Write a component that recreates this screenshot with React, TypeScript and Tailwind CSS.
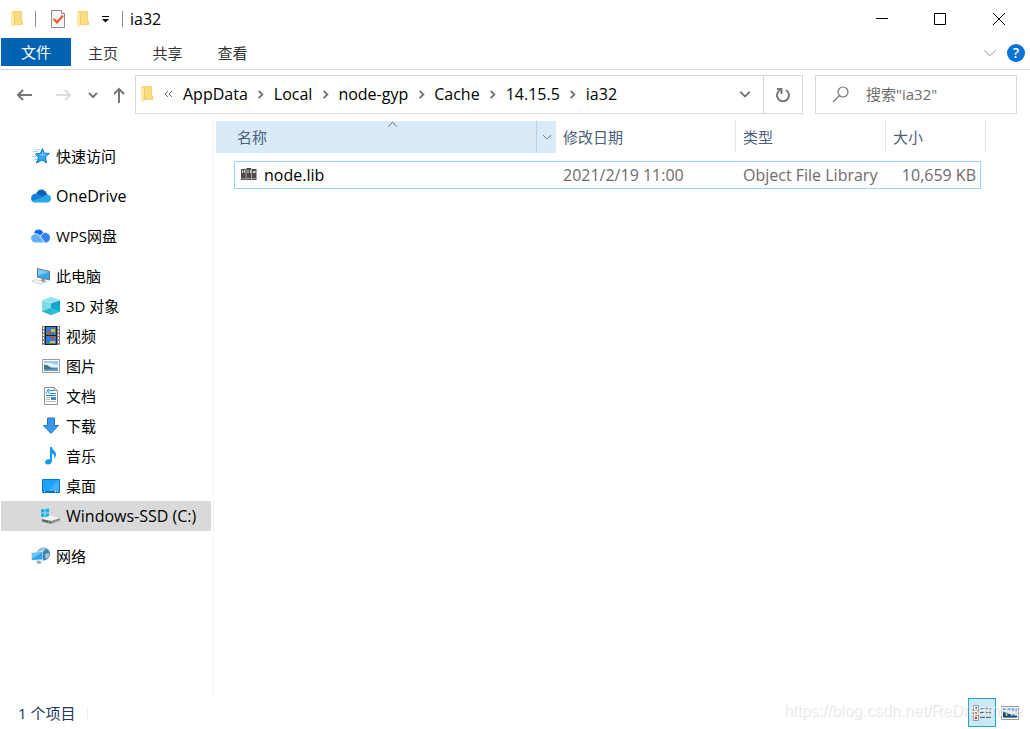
import React from "react";

const Folder = (): React.ReactElement => (
  <svg width="14" height="18" viewBox="0 0 14 18" className="shrink-0">
    <path d="M2 1h10v10h1v4H4z" fill="#f6d470" />
    <path d="M4 2h7v10h1v2H4z" fill="#fadc84" />
    <path d="M1 1l3 2.500v14L1 15.500z" fill="#ffe9a6" />
    <path d="M4.500 3v12" stroke="#efc761" strokeWidth="0.8" />
  </svg>
);

const Checklist = (): React.ReactElement => (
  <svg width="16" height="20" viewBox="0 0 16 20">
    <path d="M1.500 1.500h10l3 3v14h-13z" fill="#f4f6fa" stroke="#8d8d8d" />
    <path d="M11.500 1.500v3h3" fill="#fff" stroke="#8d8d8d" />
    <path d="M3.500 10l3.500 3.500 6-7" fill="none" stroke="#f0561d" strokeWidth="2" />
  </svg>
);

const Chevron = ({
  size = 10,
  dir = "down",
  color = "#767676",
  width = 2,
}: {
  size?: number;
  dir?: "down" | "up" | "right";
  color?: string;
  width?: number;
}): React.ReactElement => {
  const paths = {
    down: "M1 3l4 4 4-4",
    up: "M1 7l4-4 4 4",
    right: "M3 1l4 4-4 4",
  };
  return (
    <svg
      width={size}
      height={size}
      viewBox="0 0 10 10"
      className="shrink-0"
      fill="none"
      stroke={color}
    >
      <path
        d={paths[dir]}
        strokeWidth={width}
        vectorEffect="non-scaling-stroke"
      />
    </svg>
  );
};

const StarIcon = () => (
  <svg width="20" height="18" viewBox="0 0 20 18">
    <path
      d="M11.500 1.500l1.600 4.700 5.400.2-4.200 3.400 1.300 6.200-4.600-3L5.500 16l2-5.300L4.500 7l4.700-.5z"
      fill="#31a5f0"
      stroke="#1177be"
      strokeWidth="1"
    />
    <path d="M11.500 4l1 3 3 .5-4 2-3-2 2-.5z" fill="#5fc4fa" />
    <path d="M4 2.500h5M2 4.500h5M1 9.500h4M3 12.500h3" stroke="#a5d3f1" />
  </svg>
);

const OneDriveIcon = () => (
  <svg width="20" height="14" viewBox="0 0 20 14">
    <path d="M5 5.500C6 2 8 .5 10.500.5 13.500.5 15.500 3 16.500 6l-6 3z" fill="#0a5fb5" />
    <path d="M4.500 4.500C1.500 5 0 7 0 9.300 0 11.500 1.500 13.500 4 13.500L13 8.500 8 5.200C7 4.600 6 4.300 4.500 4.500z" fill="#1080d8" />
    <path d="M12 8c1-1.700 3-2.500 5-2.200 2 .4 3 1.800 3 3.800 0 2.400-1.500 3.900-3.500 3.900H4c-1.500 0-2.500-.6-3.200-1.700z" fill="#28a8ea" />
  </svg>
);

const WpsIcon = () => (
  <svg width="20" height="14" viewBox="0 0 20 14">
    <path d="M12 3.500c4-.6 7 2 7 5 0 3-2 5-5 5l-5-6z" fill="#3385f7" />
    <path d="M3 4.500C3.500 2 5 .5 7.500.5c2.500 0 4 1.300 4.500 3L9 7 6 5z" fill="#1769ee" />
    <path d="M4.500 5C7 4.500 9 6 10.500 8.500L14 13.500H4.500C2 13.500 0 12 0 9.300 0 7 2 5.200 4.500 5z" fill="#64b0fc" />
    <path d="M3 4.800c5-.8 6 3.200 10.500 8.700M9.500 7.500C10.500 5 12 3.800 14 3.600" fill="none" stroke="#fff" strokeWidth="0.8" />
  </svg>
);

const PcIcon = () => (
  <svg width="20" height="18" viewBox="0 0 20 18">
    <path d="M6 1l13 3v9.500L6 10.500z" fill="#68727c" />
    <path d="M7 2.200l11 2.600v7.500L7 9.700z" fill="#36a9ed" />
    <path d="M7 2.200l11 2.600-11 4z" fill="#79cbf7" />
    <path d="M11 11.500l3 .8v2.200h3l-5 1.500-3-1z" fill="#8d98a1" />
    <path d="M1 14l4-1.500 8 2.500-3 2.500z" fill="#e4e7e9" stroke="#b9bfc3" strokeWidth="0.6" />
    <path d="M3 14l7 2.500M5 13.300l6 2" stroke="#fff" strokeWidth="0.7" />
  </svg>
);

const CubeIcon = () => (
  <svg width="20" height="20" viewBox="0 0 20 20">
    <path d="M1 4l9-3 9 3-9 3z" fill="#8be3ec" />
    <path d="M1 4l9 3v12l-9-3.500z" fill="#7dd9e2" />
    <path d="M19 4l-9 3v12l9-3.500z" fill="#12a5cf" />
    <path d="M1 15.500l9-3.500v7z" fill="#27b4cf" />
    <path d="M10 12l9 3.500-9 3.500z" fill="#31c0d8" />
    <path d="M1 4l9 3 9-3" fill="none" stroke="#c9f4f6" strokeWidth="0.7" />
  </svg>
);

const VideoIcon = () => (
  <svg width="18" height="20" viewBox="0 0 18 20">
    <path d="M0 0h18v19H0z" fill="#77797b" />
    <path d="M3 0h12v19H3z" fill="#202226" />
    <path d="M4 1h10v8H4zM4 10h10v8H4z" fill="#3979d6" />
    <path d="M9 3h4v3H9zM8 15h5v2H8z" fill="#e9b931" />
    <path d="M5 6h4v2H5zM9 10h4v2H9z" fill="#d34836" />
    <path d="M4 8h4v1H4zM10 7h3v2h-3zM6 17h5v1H6z" fill="#3a8e4c" />
    <path d="M1.500 1v18M16.500 1v18" stroke="#fff" strokeDasharray="2 1.500" />
  </svg>
);

const PictureIcon = ({ dark = false }: { dark?: boolean }) => (
  <svg width="18" height="14" viewBox="0 0 18 14">
    <path d="M.5.5h17v13H.5z" fill="#fff" stroke="#9b9b9b" />
    <path d="M2 2h14v10H2z" fill={dark ? "#82b5ef" : "#9bcbed"} />
    <path d="M2 4c2 .5 4-1 6 0s4 1 8 2v2H2z" fill="#e8f4fb" />
    <path d="M2 6c2-.5 4 .5 6 2s5 1 8 1.500V11H2z" fill="#3f7780" />
    <path d="M2 10h14v2H2z" fill="#5c9acb" />
    {dark && <path d="M2 7h3v2h3V8h3v2h5v1H2z" fill="#245251" />}
  </svg>
);

const DocIcon = () => (
  <svg width="16" height="18" viewBox="0 0 16 18">
    <path d="M1.500.5h10l3 3v14h-13z" fill="#fff" stroke="#939393" />
    <path d="M11.500.5v3h3" fill="#eee" stroke="#939393" />
    <path d="M3 6.500l2-4h1v4M7 3.500h4M7 6.500h6" stroke="#1588cf" fill="none" />
    <path d="M3 8.500h10" stroke="#1588cf" />
    <path d="M3 10.500h4M3 12.500h4M3 14.500h10" stroke="#b5b5b5" />
    <path d="M8 10h5v3H8z" fill="#3f8cc0" />
  </svg>
);

const DownloadIcon = () => (
  <svg width="18" height="18" viewBox="0 0 18 18">
    <path d="M5.500 1h7v7.500h4L9 16.500 1.500 8.500h4z" fill="#3b97e8" stroke="#2277c2" />
  </svg>
);

const MusicIcon = () => (
  <svg width="14" height="18" viewBox="0 0 14 18">
    <path
      d="M6 0h2c0 3 4 4 4 7.500 0 2-1 3-2 4 .8-3-.2-4.500-2-5V14c0 2-1.800 3.500-4 3.500S1 16.500 1 15c0-2 2.500-3.300 5-2.700z"
      fill="#129bed"
    />
  </svg>
);

const DesktopIcon = () => (
  <svg width="18" height="14" viewBox="0 0 18 14">
    <path d="M.5.5h17v13H.5z" fill="#19a1fb" stroke="#0878cb" />
    <path d="M6 12L16 1h1v11z" fill="#3eb1ff" />
    <path d="M1 12h16v1H1z" fill="#076db9" />
    <path d="M2 12h1v1H2zM13 12h1v1h-1zM15 12h1v1h-1z" fill="#fff" />
  </svg>
);

const DriveIcon = () => (
  <svg width="20" height="18" viewBox="0 0 20 18">
    <path d="M0 2.500L3.500 2v3.500H0zM4.500 2L8 1.500v4H4.500zM0 6.500h3.500V10L0 9.500zM4.500 6.500H8v4L4.500 10z" fill="#08b0ee" />
    <path d="M1 12l8-3.500 10 2.500-9 3.500z" fill="#f1f1f1" />
    <path d="M1 12l9 2v3l-9-2.500z" fill="#65686a" />
    <path d="M10 14l9-3v2.500L10 17z" fill="#8f9294" />
    <path d="M7 14.500l2 .5v1l-2-.5z" fill="#52d657" />
  </svg>
);

const NetworkIcon = () => (
  <svg width="20" height="18" viewBox="0 0 20 18">
    <circle cx="12.500" cy="7" r="6.500" fill="#4585ad" />
    <path d="M8 3c2-2 5-2.500 7-1.500l-2 2.500-3 1-2 1zM14 7l4-1c.5 3-1 5-3 6.500z" fill="#a5cbdd" />
    <path d="M0 5.500l12-1.500v9L0 14z" fill="#e1e8ec" />
    <path d="M1 6.300l10.500-1.300v7.200L1 13z" fill="#2ba4eb" />
    <path d="M1 6.300l10.500-1.300L1 12z" fill="#69c4f6" />
    <path d="M5 14l4-.3 2 2.300-4 1z" fill="#9aa8b1" />
  </svg>
);

const LibIcon = () => (
  <svg width="16" height="14" viewBox="0 0 16 14">
    <path d="M0 1h4.800v11H0zM5.300 0h4.900v12H5.300zM10.700 1h4.800v11h-4.800z" fill="#4b4b4b" />
    <path d="M1 2h1v3H1zM3 2h1v3H3zM6.500 2h1v3h-1zM9 2h1v3H9zM12 3h2.500v2H12z" fill="#d5d5d5" />
    <path d="M.5 10.500h4M5.500 10.500h4M11 10.500h4" stroke="#9a9a9a" />
  </svg>
);

const DetailsIcon = () => (
  <svg width="18" height="16" viewBox="0 0 18 16">
    <path d="M.5.5h5v5h-5zM.5 5.500h5v5h-5zM.5 10.500h5v5h-5z" fill="#fff" stroke="#999" />
    <path d="M2 2h2v2H2z" fill="#3e6587" />
    <path d="M2 7h2v2H2z" fill="#d86b36" />
    <path d="M2 12h2v2H2z" fill="#c52020" />
    <path d="M7 3.500h5M13 3.500h5M7 7.500h5M13 7.500h5M7 12.500h5M13 12.500h5" stroke="#666" />
  </svg>
);

const roots = [
  { label: "快速访问", icon: <StarIcon /> },
  { label: "OneDrive", icon: <OneDriveIcon />, latin: true },
  { label: "WPS网盘", icon: <WpsIcon /> },
];

const places = [
  { label: "3D 对象", icon: <CubeIcon /> },
  { label: "视频", icon: <VideoIcon /> },
  { label: "图片", icon: <PictureIcon /> },
  { label: "文档", icon: <DocIcon /> },
  { label: "下载", icon: <DownloadIcon /> },
  { label: "音乐", icon: <MusicIcon /> },
  { label: "桌面", icon: <DesktopIcon /> },
  { label: "Windows-SSD (C:)", icon: <DriveIcon />, latin: true, active: true },
];

const crumbs = ["AppData", "Local", "node-gyp", "Cache", "14.15.5", "ia32"];

const TreeItem = ({
  label,
  icon,
  active,
  nested,
  latin,
}: {
  label: string;
  icon: React.ReactNode;
  active?: boolean;
  nested?: boolean;
  latin?: boolean;
}): React.ReactElement => (
  <a
    href="#"
    className={`flex h-[30px] items-center gap-[5px] ${
      nested ? "pl-10" : "pl-[30px]"
    } ${active ? "bg-[#d9d9d9]" : ""} ${latin ? "text-[16px]" : ""}`}
  >
    <span className="flex w-5 justify-center">{icon}</span>
    {label}
  </a>
);

const TitleBar = (): React.ReactElement => (
  <header className="flex h-[38px] items-center pr-px pl-[10px]">
    <Folder />
    <span className="ml-[11px] h-4 w-px bg-[#8c8c8c]" />
    <button aria-label="Properties" className="ml-[14px]">
      <Checklist />
    </button>
    <button aria-label="New folder" className="ml-[10px]">
      <Folder />
    </button>
    <button aria-label="Customize toolbar" className="ml-3">
      <svg width="8" height="8" viewBox="0 0 8 8">
        <path d="M0 1.500h7" stroke="#000" />
        <path d="M0 4h7L3.500 7.500z" fill="#000" />
      </svg>
    </button>
    <span className="ml-3 h-4 w-px bg-[#8c8c8c]" />
    <h1 className="ml-[7px] text-[16px]">ia32</h1>
    <div className="ml-auto flex h-full">
      <button aria-label="Minimize" className="flex w-[58px] items-center justify-center">
        <svg width="12" height="12" stroke="#000">
          <path d="M0 5.500h12" />
        </svg>
      </button>
      <button aria-label="Maximize" className="flex w-[58px] items-center justify-center">
        <svg width="12" height="12" stroke="#000" fill="none">
          <path d="M.5.5h11v11H.5z" />
        </svg>
      </button>
      <button aria-label="Close" className="flex w-[60px] items-center justify-center">
        <svg width="12" height="12" stroke="#000">
          <path d="M0 0l12 12M12 0L0 12" />
        </svg>
      </button>
    </div>
  </header>
);

const Ribbon = (): React.ReactElement => (
  <nav className="flex h-8 items-start border-b border-[#dadbdc] pl-px text-[#333]">
    <button className="h-7 w-[70px] bg-[#0063b1] text-white">文件</button>
    <button className="h-[30px] w-16">主页</button>
    <button className="h-[30px] w-[65px]">共享</button>
    <button className="h-[30px] w-[65px]">查看</button>
    <button aria-label="Expand ribbon" className="mr-2.5 ml-auto h-[30px]">
      <Chevron size={14} color="#999" width={1} />
    </button>
    <button
      aria-label="Help"
      className="mt-1.5 mr-[5px] h-[18px] w-[18px] rounded-full bg-[#0873d6] text-sm leading-[18px] font-semibold text-white"
    >
      ?
    </button>
  </nav>
);

const AddressRow = (): React.ReactElement => (
  <div className="flex h-[39px] items-stretch pr-[13px]">
    <div className="flex w-[135px] items-center pl-4">
      <button aria-label="Back">
        <svg width="18" height="14" fill="none" stroke="#777" strokeWidth="2">
          <path d="M16 7H2M7 2L2 7l5 5" />
        </svg>
      </button>
      <button aria-label="Forward" className="ml-[21px]">
        <svg width="18" height="14" fill="none" stroke="#dcdcdc" strokeWidth="2">
          <path d="M1 7h14M10 2l5 5-5 5" />
        </svg>
      </button>
      <button aria-label="Recent locations" className="ml-[15px]">
        <Chevron />
      </button>
      <button aria-label="Up" className="ml-[14px]">
        <svg width="14" height="18" fill="none" stroke="#777" strokeWidth="2">
          <path d="M7 17V3M2 8l5-5 5 5" />
        </svg>
      </button>
    </div>
    <div className="flex flex-1 border border-[#d9d9d9]">
      <div className="flex flex-1 items-center pb-px pl-1 text-[16px]">
        <Folder />
        <svg width="10" height="8" fill="none" stroke="#777" className="mr-[9px] ml-[10px]">
          <path d="M4 1L1 4l3 3M8 1L5 4l3 3" />
        </svg>
        {crumbs.map((name, i) => (
          <React.Fragment key={name}>
            {i > 0 && (
              <span className="flex w-[26px] justify-center">
                <Chevron dir="right" size={9} />
              </span>
            )}
            <button>{name}</button>
          </React.Fragment>
        ))}
        <button aria-label="Previous locations" className="mr-3 ml-auto">
          <Chevron size={12} />
        </button>
      </div>
      <button
        aria-label="Refresh"
        className="flex w-[39px] items-center justify-center border-l border-[#d9d9d9]"
      >
        <svg width="16" height="16" fill="none" stroke="#777" strokeWidth="2">
          <path d="M11 3a6 6 0 1 1-6 0M2 2h4.500v5" />
        </svg>
      </button>
    </div>
    <label className="ml-3 flex w-[202px] items-center border border-[#d9d9d9] pb-0.5 pl-4">
      <svg width="18" height="18" fill="none" stroke="#777" strokeWidth="1.2">
        <circle cx="11" cy="7" r="5" />
        <path d="M7.500 10.500L1 17" />
      </svg>
      <input
        aria-label="搜索"
        placeholder={'搜索"ia32"'}
        className="ml-4 w-32 outline-none placeholder:text-[#6d6d6d]"
      />
    </label>
  </div>
);

const Sidebar = (): React.ReactElement => (
  <aside className="flex w-[214px] shrink-0 flex-col gap-2.5 border-r border-[#f3f3f3] pt-5 pr-0.5 pl-px">
    {roots.map((item) => (
      <TreeItem key={item.label} {...item} />
    ))}
    <div>
      <TreeItem label="此电脑" icon={<PcIcon />} />
      {places.map((item) => (
        <TreeItem key={item.label} {...item} nested />
      ))}
    </div>
    <TreeItem label="网络" icon={<NetworkIcon />} />
  </aside>
);

const FileTable = (): React.ReactElement => (
  <table className="ml-0.5 w-[770px] table-fixed border-separate border-spacing-0 text-left">
    <colgroup>
      <col className="w-[340px]" />
      <col className="w-[180px]" />
      <col className="w-[150px]" />
      <col className="w-[100px]" />
    </colgroup>
    <thead className="text-[#4c607a]">
      <tr className="h-8">
        <th className="relative bg-[#d9ebf9] p-0 font-normal">
          <div className="flex h-8 items-center pl-[21px]">
            <button>名称</button>
            <button
              aria-label="Filter"
              className="ml-auto flex h-8 w-5 items-center justify-center border-l border-[#b9cfe0]"
            >
              <Chevron size={10} color="#6d7d8c" width={1} />
            </button>
          </div>
          <span className="absolute top-[-2px] left-[171px]">
            <Chevron size={11} dir="up" color="#5f6a74" width={1} />
          </span>
        </th>
        <th className="border-r border-[#e5e5e5] p-0 pl-[7px] font-normal">修改日期</th>
        <th className="border-r border-[#e5e5e5] p-0 pl-[7px] font-normal">类型</th>
        <th className="border-r border-[#e5e5e5] p-0 pl-[7px] font-normal">大小</th>
      </tr>
    </thead>
    <tbody className="text-[16px] text-[#6d6d6d]">
      <tr>
        <td className="p-0 pt-2 pl-[18px]">
          <div className="flex h-7 items-center gap-[7px] border-y border-l border-[#99d1ff] pl-1.5 text-black">
            <LibIcon />
            node.lib
          </div>
        </td>
        <td className="p-0 pt-2">
          <div className="flex h-7 items-center border-y border-[#99d1ff] pl-[7px]">
            2021/2/19 11:00
          </div>
        </td>
        <td className="p-0 pt-2">
          <div className="flex h-7 items-center border-y border-[#99d1ff] pl-[7px] whitespace-nowrap">
            Object File Library
          </div>
        </td>
        <td className="p-0 pt-2 pr-[5px]">
          <div className="flex h-7 items-center justify-end border-y border-r border-[#99d1ff] pr-1 whitespace-nowrap">
            10,659 KB
          </div>
        </td>
      </tr>
    </tbody>
  </table>
);

const StatusBar = (): React.ReactElement => (
  <footer className="relative flex h-[31px] items-center pr-[11px] pb-0.5 pl-[18px] text-[#1e395b]">
    <span>1 个项目</span>
    <span className="ml-3 h-3 w-px bg-[#eee]" />
    <button
      aria-label="Details view"
      className="ml-auto flex h-[29px] w-7 items-center justify-center border border-[#26a0da] bg-[#cbe8f6]"
    >
      <DetailsIcon />
    </button>
    <button aria-label="Thumbnail view" className="ml-[5px]">
      <PictureIcon dark />
    </button>
    <span className="pointer-events-none absolute top-[3px] right-2 font-['Liberation_Sans',sans-serif] text-[16px] leading-5 text-white/70 [text-shadow:1px_1px_1px_#0002]">
      https://blog.csdn.net/ReDreamme
    </span>
  </footer>
);

const App = (): React.ReactElement => {
  return (
    <div className="flex min-h-screen flex-col bg-white font-['Open_Sans','Noto_Sans_CJK_SC',sans-serif] text-[15px] leading-5 text-black">
      <TitleBar />
      <Ribbon />
      <div className="pt-[5px]">
        <AddressRow />
      </div>
      <main className="flex flex-1 pt-[7px]">
        <Sidebar />
        <section className="min-w-0 flex-1">
          <FileTable />
        </section>
      </main>
      <StatusBar />
    </div>
  );
};

export default App;
